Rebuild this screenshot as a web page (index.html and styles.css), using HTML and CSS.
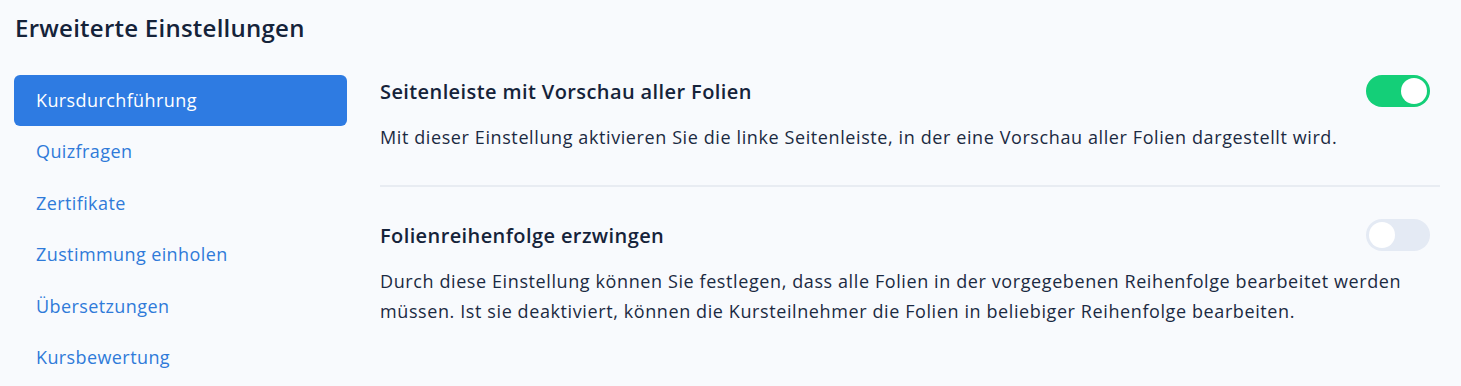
FILE: index.html
```html
<!DOCTYPE html>
<html>
<head>
    <meta charset="utf-8" />
    <title>Erweiterte Einstellungen</title>
    <link rel="stylesheet" href="styles.css">
</head>
<body>
<h1 class="title">Erweiterte Einstellungen</h1>
<div class="layout">
    <ul class="side_nav">
        <li class="active"><a href="javascript:;">Kursdurchführung</a></li>
        <li><a href="javascript:;">Quizfragen</a></li>
        <li><a href="javascript:;">Zertifikate</a></li>
        <li><a href="javascript:;">Zustimmung einholen</a></li>
        <li><a href="javascript:;">Übersetzungen</a></li>
        <li><a href="javascript:;">Kursbewertung</a></li>
    </ul>
    <div class="settings">
        <div class="setting">
            <div class="setting_head">
                <h2>Seitenleiste mit Vorschau aller Folien</h2>
                <span class="switch on"><span class="knob"></span></span>
            </div>
            <p>Mit dieser Einstellung aktivieren Sie die linke Seitenleiste, in der eine Vorschau aller Folien dargestellt wird.</p>
        </div>
        <div class="setting">
            <div class="setting_head">
                <h2>Folienreihenfolge erzwingen</h2>
                <span class="switch"><span class="knob"></span></span>
            </div>
            <p>Durch diese Einstellung können Sie festlegen, dass alle Folien in der vorgegebenen Reihenfolge bearbeitet werden müssen. Ist sie deaktiviert, können die Kursteilnehmer die Folien in beliebiger Reihenfolge bearbeiten.</p>
        </div>
    </div>
</div>
</body>
</html>
```

FILE: styles.css
```css
*{margin:0;padding:0;box-sizing:border-box;}
body{
    background:#f8fafd;
    font-family:"Open Sans",Lato,sans-serif;
    color:#172640;
    padding:14px 21px 0 14px;
}
li{list-style:none;}
a{text-decoration:none;}
.title{
    font-size:24px;
    line-height:28px;
    font-weight:600;
    letter-spacing:0.25px;
    color:#15233a;
    margin:0 0 33px 1px;
}
.layout{display:flex;align-items:flex-start;}
.side_nav{width:333px;flex:none;}
.side_nav li{height:51.4px;}
.side_nav a{
    display:block;
    height:51px;
    line-height:51px;
    padding-left:22px;
    font-size:18px;
    letter-spacing:0.4px;
    color:#2f7ad9;
    border-radius:6px;
}
.side_nav .active a{background:#2e7be2;color:#fff;}
.settings{margin-left:33px;flex:1;}
.setting{padding-bottom:33px;}
.setting + .setting{border-top:2px solid #e8ecf2;padding-top:32px;}
.setting_head{
    display:flex;
    align-items:center;
    justify-content:space-between;
    height:32px;
    margin-bottom:15px;
}
.setting_head h2{font-size:20px;font-weight:600;letter-spacing:0.4px;color:#15233a;}
.setting p{font-size:18px;line-height:30px;letter-spacing:0.6px;color:#1b2a42;padding-right:20px;}
.switch{
    width:64px;
    height:32px;
    border-radius:16px;
    background:#e4eaf4;
    padding:3px;
    display:flex;
    margin-right:10px;
}
.switch .knob{width:26px;height:26px;border-radius:50%;background:#fff;}
.switch.on{background:#14cf78;justify-content:flex-end;}
```
